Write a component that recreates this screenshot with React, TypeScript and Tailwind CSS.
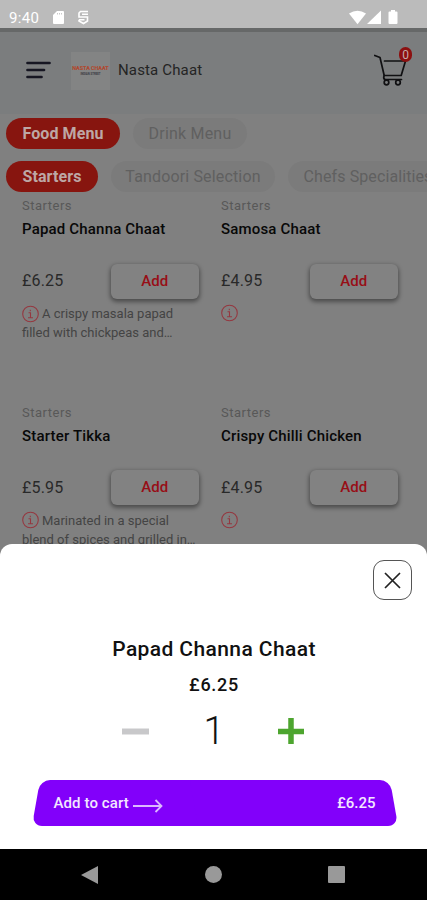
import React, { useState } from 'react';

interface MenuItem {
  name: string;
  price: string;
  lines: string[];
}

const items: MenuItem[] = [
  { name: 'Papad Channa Chaat', price: '£6.25', lines: ['A crispy masala papad', 'filled with chickpeas and…'] },
  { name: 'Samosa Chaat', price: '£4.95', lines: [] },
  { name: 'Starter Tikka', price: '£5.95', lines: ['Marinated in a special', 'blend of spices and grilled in…'] },
  { name: 'Crispy Chilli Chicken', price: '£4.95', lines: [] },
];

function StatusBar() {
  return (
    <div className="flex h-[28px] shrink-0 items-end justify-between bg-[#bbbbbb] pl-[9px] pr-[29px] text-white">
      <div className="flex items-end">
        <span className="w-[44px] text-[15px] leading-[20px] tracking-[0.3px]">9:40</span>
        <svg className="mb-[3px] h-[15px] w-[11px]" viewBox="0 0 11 15">
          <path d="M4 1h6a1 1 0 0 1 1 1v11a1 1 0 0 1-1 1H1a1 1 0 0 1-1-1V5z" fill="currentColor" />
          <path d="M4.500 3v1.500M6.500 3v1.500M8.500 3v1.500" stroke="#bbbbbb" strokeWidth="0.8" />
        </svg>
        <svg className="mb-[3px] ml-[14px] h-[15px] w-[11px]" viewBox="0 0 11 15" fill="none" stroke="currentColor" strokeWidth="1.600">
          <path d="M10 1.500H2.500L1 3V7H9.500V11L5.500 13.500 1 11V9.800M4 4.300h6M1 9.800h5.500" />
        </svg>
      </div>
      <div className="mb-[3px] flex">
        <svg className="h-[15px] w-[17px]" viewBox="0 0 17 15" fill="currentColor">
          <path d="M0 3.500Q8.500-2 17 3.500L8.500 14.300z" />
        </svg>
        <svg className="ml-[1px] h-[15px] w-[14px]" viewBox="0 0 14 15" fill="currentColor">
          <path d="M14 .5V14H0z" />
        </svg>
        <svg className="ml-[7px] h-[15px] w-[10px]" viewBox="0 0 10 15" fill="currentColor">
          <path d="M3 0h4v1.500h1.500q1 0 1 1V13q0 1-1 1h-7q-1 0-1-1V2.500q0-1 1-1H3z" />
        </svg>
      </div>
    </div>
  );
}

function Header() {
  return (
    <div className="flex h-[86px] shrink-0 items-start border-t-[4px] border-[#666868] bg-[#7b7d7e] pl-[26px] pr-[15px]">
      <svg className="mt-[29px] h-[18px] w-[25px]" viewBox="0 0 25 18" stroke="#161622" strokeWidth="2.700" strokeLinecap="round">
        <path d="M1.500 2h22M1.500 9H18M1.500 16h14" />
      </svg>
      <div className="ml-[20px] mt-[20px] flex h-[38px] w-[39px] flex-col items-center bg-[#838484] pt-[13px]">
        <span className="whitespace-nowrap text-[5.500px] font-black leading-[7px] tracking-[-0.100px] text-[#b04a30]">NASTA CHAAT</span>
        <span className="whitespace-nowrap text-[2.800px] font-bold leading-[4px] text-[#3a3a42]">INDIAN STREET</span>
      </div>
      <span className="ml-[8px] mt-[28px] text-[15px] leading-[20px] tracking-[0.15px] text-[#242424]">Nasta Chaat</span>
      <div className="relative ml-auto mt-[14px] h-[42px] w-[38px]">
        <svg className="h-[42px] w-[38px]" viewBox="0 0 38 42" fill="none" stroke="#101012" strokeWidth="1.700" strokeLinecap="round" strokeLinejoin="round">
          <path d="M.8 9.500 6 11.500 10.200 29.500H27.200L31.500 15M10.500 15H31.500M11 33.500H27.500" />
          <path d="M10.200 29.500q-1.200 2.500.5 4" />
          <circle cx="12.500" cy="36.500" r="2.300" />
          <circle cx="24" cy="36.500" r="2.300" />
        </svg>
        <span className="absolute left-[25px] top-[1px] flex h-[15px] w-[13px] items-center justify-center rounded-full bg-[#8c1010] text-[12px] text-[#c4aaaa]">0</span>
      </div>
    </div>
  );
}

function InfoIcon() {
  return (
    <svg className="h-[18px] w-[17px] shrink-0" viewBox="0 0 17 18" fill="none" stroke="#943840" strokeWidth="1.100">
      <circle cx="8.500" cy="9" r="7.800" />
      <path d="M6.500 7.800h2v5M6 12.800h5M8.300 4.800v1.400" />
    </svg>
  );
}

function MenuCard({ item }: { item: MenuItem }) {
  return (
    <div className="h-[206.500px] w-[199px] shrink-0 pl-[22px]">
      <div className="text-[13px] leading-[18px] tracking-[0.500px] text-[#585858]">Starters</div>
      <div className="mt-[4px] whitespace-nowrap text-[15px] font-medium leading-[20px] tracking-[0.180px] text-[#080808]">{item.name}</div>
      <div className="mt-[24px] flex h-[36px] items-center">
        <span className="w-[89px] text-[16px] tracking-[0.200px] text-[#292929]">{item.price}</span>
        <button className="h-[35px] w-[89px] rounded-[6px] bg-[#828282] text-[15px] font-medium text-[#970e16] shadow-[0_2px_4px_1px_rgba(0,0,0,0.4)]">Add</button>
      </div>
      <div className="mt-[5px] whitespace-nowrap text-[13px] leading-[19px] text-[#444444]">
        <div className="flex items-center gap-[3px]">
          <InfoIcon />
          <span>{item.lines[0]}</span>
        </div>
        <div>{item.lines[1]}</div>
      </div>
    </div>
  );
}

function AddToCartSheet() {
  const [qty, setQty] = useState(1);

  return (
    <div className="absolute inset-x-0 bottom-0 flex h-[305px] flex-col items-center rounded-t-[12px] bg-white">
      <button className="mr-[15px] mt-[16px] flex h-[40px] w-[39px] items-center justify-center self-end rounded-[11px] border border-[#555555]">
        <svg className="h-[17px] w-[17px]" viewBox="0 0 17 17" stroke="#222222" strokeWidth="1.700">
          <path d="m1 1 15 15M16 1 1 16" />
        </svg>
      </button>
      <div className="mt-[36px] pl-[1px] text-[21px] font-medium leading-[26px] tracking-[0.400px] text-[#111111]">Papad Channa Chaat</div>
      <div className="mt-[12px] pl-[1px] text-[18px] font-medium leading-[22px] tracking-[0.700px] text-[#111111]">£6.25</div>
      <div className="mt-[12px] flex h-[46px] w-[184px] items-center justify-between">
        <button onClick={() => setQty(Math.max(1, qty - 1))}>
          <svg className="h-[26px] w-[27px]" viewBox="0 0 27 26" stroke="#c8c8ca" strokeWidth="6">
            <path d="M0 13.500h27" />
          </svg>
        </button>
        <span className="pl-[2px] text-[38px] font-light leading-[46px] text-[#111111]">{qty}</span>
        <button onClick={() => setQty(qty + 1)}>
          <svg className="ml-[1px] h-[26px] w-[27px]" viewBox="0 0 27 26" stroke="#4da52f" strokeWidth="5.500">
            <path d="M0 13.500h26M13 0v26" />
          </svg>
        </button>
      </div>
      <button className="relative ml-[2px] mt-[26px] flex h-[46px] w-[358px] items-center px-[18px] text-[15px] font-medium text-[#f3e7ff]">
        {/* Tapered ends */}
        <span className="absolute inset-y-0 left-0 w-[200px] skew-x-[-10deg] rounded-l-[10px] bg-[#8200fa]" />
        <span className="absolute inset-y-0 right-0 w-[200px] skew-x-[10deg] rounded-r-[10px] bg-[#8200fa]" />
        <span className="relative tracking-[0.1px]">Add to cart</span>
        <svg className="relative ml-[4px] mt-[5px] h-[14px] w-[30px]" viewBox="0 0 30 14" fill="none" stroke="#dcb8ff" strokeWidth="1.800">
          <path d="M0 7h28M22.500 1l6 6-6 6" />
        </svg>
        <span className="relative ml-auto">£6.25</span>
      </button>
    </div>
  );
}

export default function App() {
  return (
    <div className="flex h-[900px] w-[427px] flex-col overflow-hidden font-['Roboto',sans-serif]">
      <div className="relative flex h-[849px] shrink-0 flex-col overflow-hidden bg-[#808080]">
        <StatusBar />
        <Header />

        {/* Category tabs */}
        <div className="mt-[4px] flex gap-[13px] pl-[6px] text-[16px]">
          <button className="h-[31px] w-[114px] rounded-full bg-[#87150f] font-bold leading-[31px] tracking-[0.1px] text-[#bda7a5]">Food Menu</button>
          <button className="h-[31px] w-[114px] rounded-full bg-[#7b7b7b] leading-[31px] tracking-[0.2px] text-[#606060]">Drink Menu</button>
        </div>
        <div className="mt-[12px] flex gap-[13px] whitespace-nowrap pl-[6px] text-[16px]">
          <button className="h-[31px] w-[92px] shrink-0 rounded-full bg-[#87150f] font-bold leading-[31px] tracking-[0.1px] text-[#bda7a5]">Starters</button>
          <button className="h-[31px] w-[164px] shrink-0 rounded-full bg-[#7b7b7b] leading-[31px] tracking-[0.15px] text-[#606060]">Tandoori Selection</button>
          <button className="h-[31px] w-[160px] shrink-0 rounded-full bg-[#7b7b7b] leading-[31px] tracking-[0.1px] text-[#606060]">Chefs Specialities</button>
        </div>

        <div className="mt-[5px] flex flex-wrap">
          {items.map((item) => (
            <MenuCard key={item.name} item={item} />
          ))}
        </div>

        <AddToCartSheet />
      </div>

      {/* Android navigation */}
      <div className="flex h-[51px] items-center bg-black pl-[81px] text-[#999999]">
        <svg className="h-[18px] w-[17px]" viewBox="0 0 17 18" fill="currentColor">
          <path d="M17 0v18L0 9z" />
        </svg>
        <div className="ml-[107px] h-[17px] w-[17px] rounded-full bg-[#999999]" />
        <div className="ml-[106px] h-[17px] w-[17px] rounded-[1px] bg-[#999999]" />
      </div>
    </div>
  );
}
